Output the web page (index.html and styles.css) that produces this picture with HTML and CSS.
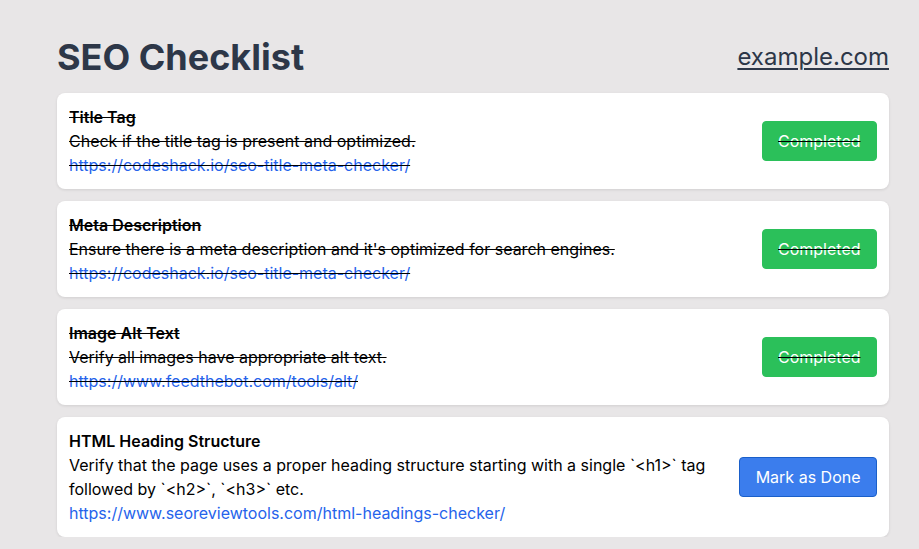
FILE: index.html
```html
<!DOCTYPE html>
<html lang="en">
<head>
<meta charset="utf-8">
<title>SEO Checklist</title>
<link rel="stylesheet" href="styles.css">
</head>
<body>
<div class="container">
  <header class="header">
    <h1 class="title">SEO Checklist</h1>
    <a class="site" href="#">example.com</a>
  </header>
  <div class="list">
    <div class="card done">
      <div class="content">
        <div class="name">Title Tag</div>
        <div class="desc">Check if the title tag is present and optimized.</div>
        <a class="link" href="#">https://codeshack.io/seo-title-meta-checker/</a>
      </div>
      <button class="btn btn-done">Completed</button>
    </div>
    <div class="card done">
      <div class="content">
        <div class="name">Meta Description</div>
        <div class="desc">Ensure there is a meta description and it's optimized for search engines.</div>
        <a class="link" href="#">https://codeshack.io/seo-title-meta-checker/</a>
      </div>
      <button class="btn btn-done">Completed</button>
    </div>
    <div class="card done">
      <div class="content">
        <div class="name">Image Alt Text</div>
        <div class="desc">Verify all images have appropriate alt text.</div>
        <a class="link" href="#">https://www.feedthebot.com/tools/alt/</a>
      </div>
      <button class="btn btn-done">Completed</button>
    </div>
    <div class="card">
      <div class="content">
        <div class="name">HTML Heading Structure</div>
        <div class="desc">Verify that the page uses a proper heading structure starting with a single `&lt;h1&gt;` tag followed by `&lt;h2&gt;`, `&lt;h3&gt;` etc.</div>
        <a class="link" href="#">https://www.seoreviewtools.com/html-headings-checker/</a>
      </div>
      <button class="btn btn-mark">Mark as Done</button>
    </div>
  </div>
</div>
</body>
</html>
```
FILE: styles.css
```css
html, body {
  margin: 0;
  padding: 0;
}
body {
  background: #e8e6e7;
  font-family: Inter, "Noto Sans", sans-serif;
  color: #000;
  font-size: 16px;
  line-height: 24px;
}
.container {
  width: 832px;
  margin: 0 0 0 57px;
  padding-top: 33px;
}
.header {
  display: flex;
  align-items: center;
  justify-content: space-between;
  height: 48px;
  margin-bottom: 12px;
}
.title {
  margin: 0;
  font-size: 36px;
  line-height: 48px;
  font-weight: 700;
  color: #2d3748;
}
.site {
  font-size: 24px;
  line-height: 32px;
  color: #2d3748;
  text-decoration: underline;
  text-underline-offset: 3px;
  text-decoration-thickness: 2px;
}
.list {
  display: flex;
  flex-direction: column;
  gap: 12px;
}
.card {
  background: #fff;
  border-radius: 8px;
  box-shadow: 0 1px 3px rgba(0,0,0,0.1);
  padding: 12px;
  display: flex;
  align-items: center;
  gap: 24px;
}
.card.done {
  text-decoration: line-through;
}
.content {
  flex: 1;
  min-width: 0;
}
.name {
  font-weight: 600;
}
.link {
  color: #2563eb;
  text-decoration: none;
}
.btn {
  font-family: inherit;
  font-size: 16px;
  line-height: 24px;
  color: #fff;
  border-radius: 4px;
  padding: 7px 15.5px;
  cursor: pointer;
  flex: none;
}
.btn-done {
  background: #2bc05a;
  border: 1px solid #2bc05a;
}
.btn-mark {
  background: #3b7ded;
  border: 1px solid #1a5fc9;
  padding: 7px 15.5px;
}
```
